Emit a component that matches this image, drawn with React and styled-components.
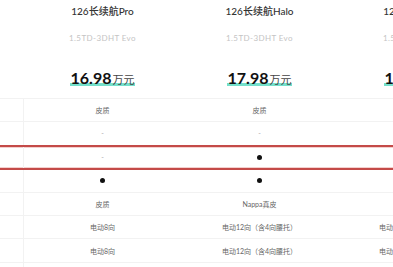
import React from "react";
import styled, { createGlobalStyle } from "styled-components";

const GlobalStyle = createGlobalStyle`
  html, body {
    margin: 0;
    padding: 0;
    background: #fff;
  }
  body {
    font-family: Lato, "Noto Sans CJK SC", sans-serif;
    overflow: hidden;
  }
`;

const Page = styled.div`
  width: 393px;
  height: 267px;
  overflow: hidden;
  background: #fff;
`;

const Grid = styled.div`
  display: grid;
  grid-template-columns: 24px repeat(3, 157px);
  width: max-content;
`;

const Header = styled(Grid)`
  height: 99px;
  border-bottom: 1px solid #f2f2f2;
  box-sizing: border-box;
`;

const HeadCell = styled.div`
  display: flex;
  flex-direction: column;
  align-items: center;
  padding-top: 4px;
`;

const Title = styled.div`
  font-size: 10px;
  line-height: 14px;
  font-weight: 500;
  color: #333;
`;

const Sub = styled.div`
  margin-top: 13px;
  font-size: 8px;
  line-height: 14px;
  letter-spacing: 0.4px;
  color: #c4c4c4;
`;

const Price = styled.div`
  margin-top: 23px;
  height: 20px;
  line-height: 20px;
  padding: 0 1px;
  color: #111;
  background: linear-gradient(
    to top,
    transparent 2px,
    #74e0cb 2px,
    #74e0cb 5px,
    transparent 5px
  );
`;

const Num = styled.span`
  font-size: 16px;
  font-weight: 700;
`;

const Unit = styled.span`
  font-size: 11px;
  margin-left: 1px;
  color: #444;
`;

const Row = styled(Grid)`
  box-sizing: border-box;
  height: ${(p) => (p.$highlight ? "25px" : "23.3px")};
  margin-top: ${(p) => (p.$highlight ? "-1px" : "0")};
  border-top: ${(p) => (p.$highlight ? "2px solid #c44a48" : "none")};
  border-bottom: ${(p) =>
    p.$highlight ? "2px solid #c44a48" : "1px solid #f2f2f2"};
  box-shadow: ${(p) =>
    p.$highlight
      ? "inset 0 1px 0 #f4d0ce, inset 0 -1px 0 #f4d0ce"
      : "none"};
`;

const Label = styled.div`
  border-right: 1px solid #f2f2f2;
`;

const Cell = styled.div`
  display: flex;
  align-items: center;
  justify-content: center;
  font-size: 7px;
  color: ${(p) => (p.$dash ? "#aaa" : "#666")};
  white-space: nowrap;
`;

const Dot = styled.span`
  width: 5px;
  height: 5px;
  border-radius: 50%;
  background: #111;
`;

const models = [
  { name: "126长续航Pro", engine: "1.5TD-3DHT Evo", price: "16.98" },
  { name: "126长续航Halo", engine: "1.5TD-3DHT Evo", price: "17.98" },
  { name: "126长续航Max", engine: "1.5TD-3DHT Evo", price: "18.98" },
];

const rows = [
  { values: ["皮质", "皮质", "皮质"] },
  { values: ["-", "-", "-"] },
  { values: ["-", "●", "●"], highlight: true },
  { values: ["●", "●", "●"] },
  { values: ["皮质", "Nappa真皮", "Nappa真皮"] },
  { values: ["电动8向", "电动12向（含4向腰托）", "电动12向（含4向腰托）"] },
  { values: ["电动8向", "电动12向（含4向腰托）", "电动12向（含4向腰托）"] },
  { values: ["", "", ""] },
];

const renderValue = (v) => {
  if (v === "●") return <Dot />;
  return v;
};

export default function App() {
  return (
    <Page>
      <GlobalStyle />
      <Header>
        <div />
        {models.map((m) => (
          <HeadCell key={m.name}>
            <Title>{m.name}</Title>
            <Sub>{m.engine}</Sub>
            <Price>
              <Num>{m.price}</Num>
              <Unit>万元</Unit>
            </Price>
          </HeadCell>
        ))}
      </Header>
      {rows.map((r, i) => (
        <Row key={i} $highlight={r.highlight}>
          <Label />
          {r.values.map((v, j) => (
            <Cell key={j} $dash={v === "-"}>
              {renderValue(v)}
            </Cell>
          ))}
        </Row>
      ))}
    </Page>
  );
}
